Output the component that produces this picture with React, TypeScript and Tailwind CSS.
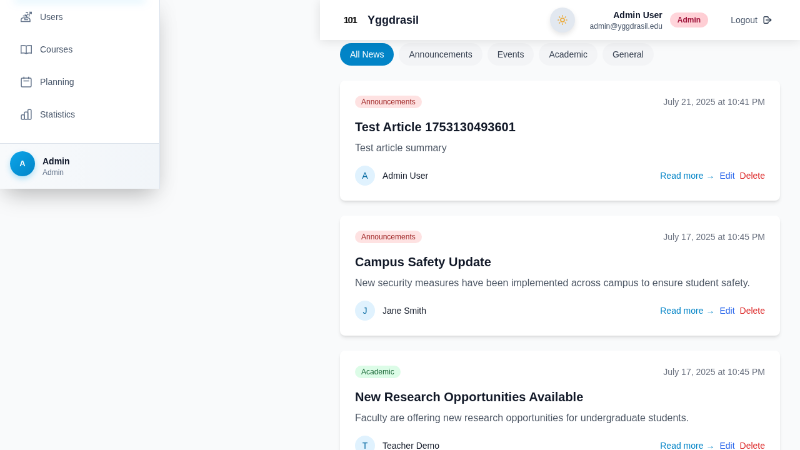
import React from "react";

type Article = { tag: string; tone: string; date: string; title: string; summary: string; author: string };

const articles: Article[] = [
  { tag: "Announcements", tone: "bg-[#fee2e2] text-[#991b1b]", date: "July 21, 2025 at 10:41 PM", title: "Test Article 1753130493601", summary: "Test article summary", author: "Admin User" },
  { tag: "Announcements", tone: "bg-[#fee2e2] text-[#991b1b]", date: "July 17, 2025 at 10:45 PM", title: "Campus Safety Update", summary: "New security measures have been implemented across campus to ensure student safety.", author: "Jane Smith" },
  { tag: "Academic", tone: "bg-[#dcfce7] text-[#166534]", date: "July 17, 2025 at 10:45 PM", title: "New Research Opportunities Available", summary: "Faculty are offering new research opportunities for undergraduate students.", author: "Teacher Demo" },
];

const nav = [
  { label: "Users", icon: <path d="M1 22v-3c0-3 2-5 5-5h9c3 0 5 2 5 5v3zM9 14v4h7M5 10h7l3 4M9 7l3 3 4-5M11 3h5M17 8l5-5M18 2h5v4M17 11l3-2" /> },
  { label: "Courses", icon: <path d="M12 5C9 3.500 5 3.500 1 4v16c3-.5 8-.5 11 1 3-1.500 8-1.500 11-1V4c-4-.5-8-.5-11 1zM12 5v15" /> },
  { label: "Planning", icon: <><rect x="1.500" y="4" width="21" height="18.500" rx="2" /><path d="M7 1v5M17 1v5M6 10h12" /></> },
  { label: "Statistics", icon: <><rect x="1.500" y="13" width="6.500" height="9.500" rx="2" /><rect x="8" y="7" width="7.500" height="15.500" rx="2" /><rect x="15.500" y="1.500" width="7" height="21" rx="2" /></> },
];

function Card({ a }: { a: Article }) {
  return (
    <article className="h-48 shrink-0 rounded-lg bg-white p-6 shadow-md">
      <div className="flex h-5 items-center justify-between">
        <span className={`flex h-5 items-center rounded-full px-2.5 text-xs ${a.tone}`}>{a.tag}</span>
        <span className="text-sm text-[#6b7280]">{a.date}</span>
      </div>
      <h2 className="mt-4 text-xl font-bold text-[#111827]">{a.title}</h2>
      <p className="mt-2 text-base text-[#4b5563]">{a.summary}</p>
      <div className="mt-4 flex h-8 items-center justify-between text-sm">
        <div className="flex items-center gap-3 text-[#111827]">
          <span className="flex size-8 items-center justify-center rounded-full bg-[#e0f2fe] text-[#0369a1]">{a.author[0]}</span>
          {a.author}
        </div>
        <div className="flex gap-2">
          <a className="text-[#0284c7]">Read more →</a>
          <a className="text-[#2563eb]">Edit</a>
          <a className="text-[#dc2626]">Delete</a>
        </div>
      </div>
    </article>
  );
}

export default function App() {
  return (
    <div className="h-[450px] w-[800px] overflow-hidden">
      {/* The dashboard is laid out for a 1280x720 desktop and shown at 62.5%. */}
      <div className="relative flex h-[720px] w-[1280px] origin-top-left scale-[0.625] overflow-hidden bg-[#f9fafb] font-['Liberation_Sans',Arial,sans-serif] will-change-transform">
        <aside className="flex h-[302px] w-64 shrink-0 flex-col border-r border-[#e2e8f0] bg-white shadow-[0_18px_34px_-10px_rgba(0,0,0,0.25),0_0_36px_rgba(0,0,0,0.05)]">
          <div className="h-[229px] overflow-hidden">
            <div className="mx-6 h-0 shadow-[0_0_14px_1px_rgba(14,165,233,0.55)]" />
            <nav className="flex flex-col pt-px">
              {nav.map((n) => (
                <a key={n.label} className="flex h-[52px] shrink-0 items-center gap-[13px] pl-[33px] text-sm text-[#475569]">
                  <svg className="size-[18px]" viewBox="0 0 24 24" fill="none" stroke="#64748b" strokeWidth="2">{n.icon}</svg>
                  {n.label}
                </a>
              ))}
            </nav>
          </div>
          <div className="flex h-[73px] items-start gap-3 border-t border-[#dbe2ea] bg-linear-to-r from-[#f8fafc] to-[#f1f5f9] pt-3 pl-4">
            <div className="flex size-10 items-center justify-center rounded-full bg-linear-to-br from-[#0ea5e9] to-[#0284c7] text-[13px] font-bold text-white shadow-[0_4px_10px_rgba(14,165,233,0.3)]">A</div>
            <div className="pt-[6px]">
              <div className="text-sm leading-5 font-bold text-[#0f172a]">Admin</div>
              <div className="text-xs leading-4 text-[#64748b]">Admin</div>
            </div>
          </div>
        </aside>

        <main className="ml-72 w-[704px] pt-[69px]">
          <div className="flex h-9 gap-2 text-sm text-[#374151]">
            {["All News", "Announcements", "Events", "Academic", "General"].map((t, i) => (
              <button key={t} className={i === 0 ? "rounded-full bg-[#0284c7] px-4 text-white" : "rounded-full bg-[#f3f4f6] px-4"}>{t}</button>
            ))}
          </div>
          <div className="mt-6 flex flex-col gap-6">
            {articles.map((a) => <Card key={a.title} a={a} />)}
          </div>
        </main>

        <header className="absolute top-0 left-[512px] flex h-16 w-3xl items-center bg-white/95 shadow-[0_2px_16px_rgba(0,0,0,0.11)]">
          <div className="ml-8 flex size-8 items-center justify-center text-[15px] font-bold tracking-[-1.5px] text-[#111]">101</div>
          <div className="ml-3 text-lg font-bold text-[#0f172a]">Yggdrasil</div>
          <div className="ml-auto flex items-center">
            <div className="flex size-10 items-center justify-center rounded-full bg-[#e2e8f0] shadow-[0_4px_8px_rgba(0,0,0,0.1)]">
              <svg className="size-4" viewBox="0 0 24 24" fill="none" stroke="#eca936" strokeWidth="2.6" strokeLinecap="round"><circle cx="12" cy="12" r="4.5" /><path d="M12 1.500v1.500M12 21v1.500M1.500 12H3M21 12h1.500M4.500 4.500l1 1M18.500 18.500l1 1M4.500 19.500l1-1M18.500 5.500l1-1" /></svg>
            </div>
            <div className="ml-6 text-right">
              <div className="text-sm leading-5 font-bold text-[#0f172a]">Admin User</div>
              <div className="text-xs leading-4 text-[#475569]">admin@yggdrasil.edu</div>
            </div>
            <div className="ml-3 flex h-6 items-center rounded-full bg-linear-to-r from-[#ffd6dc] to-[#fecdd3] px-3 text-xs font-bold text-[#9f1239]">Admin</div>
            <div className="ml-9 text-sm text-[#475569]">Logout</div>
            <svg className="mr-[45px] ml-[9px] size-[14px]" viewBox="0 0 24 24" fill="none" stroke="#334155" strokeWidth="2.4" strokeLinecap="round" strokeLinejoin="round"><path d="M14 7V5a2 2 0 0 0-2-2H4a2 2 0 0 0-2 2v14a2 2 0 0 0 2 2h8a2 2 0 0 0 2-2v-2M8 12h14M18 8l4 4-4 4" /></svg>
          </div>
        </header>
      </div>
    </div>
  );
}
